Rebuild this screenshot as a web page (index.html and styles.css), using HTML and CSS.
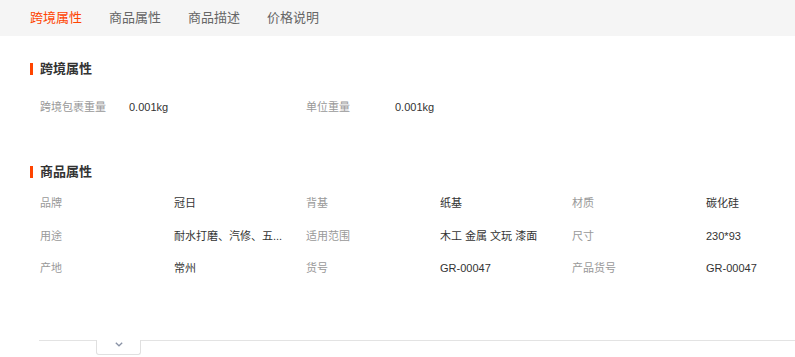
FILE: index.html
```html
<!DOCTYPE html>
<html lang="zh">
<head>
<meta charset="utf-8">
<title>商品属性</title>
<link rel="stylesheet" href="styles.css">
</head>
<body>
<nav class="tabs">
  <span class="tab active">跨境属性</span>
  <span class="tab">商品属性</span>
  <span class="tab">商品描述</span>
  <span class="tab">价格说明</span>
</nav>

<section class="section s1">
  <h2 class="title">跨境属性</h2>
  <div class="grid grid-cross">
    <span class="label">跨境包裹重量</span><span class="value">0.001kg</span>
    <span class="label">单位重量</span><span class="value">0.001kg</span>
  </div>
</section>

<section class="section s2">
  <h2 class="title">商品属性</h2>
  <div class="grid grid-attr">
    <span class="label">品牌</span><span class="value">冠日</span>
    <span class="label">背基</span><span class="value">纸基</span>
    <span class="label">材质</span><span class="value">碳化硅</span>
    <span class="label">用途</span><span class="value">耐水打磨、汽修、五...</span>
    <span class="label">适用范围</span><span class="value">木工 金属 文玩 漆面</span>
    <span class="label">尺寸</span><span class="value">230*93</span>
    <span class="label">产地</span><span class="value">常州</span>
    <span class="label">货号</span><span class="value">GR-00047</span>
    <span class="label">产品货号</span><span class="value">GR-00047</span>
  </div>
</section>

<div class="fold">
  <div class="fold-tab">
    <svg width="8" height="5" viewBox="0 0 8 5"><path d="M0.8 0.8 L4 3.8 L7.2 0.8" fill="none" stroke="#8a93a6" stroke-width="1.3"/></svg>
  </div>
</div>
</body>
</html>
```

FILE: styles.css
```css
html, body {
  margin: 0;
  padding: 0;
  background: #fff;
}
body {
  font-family: "Liberation Sans", "Noto Sans CJK SC", sans-serif;
  color: #333;
  width: 795px;
  overflow: hidden;
}
.tabs {
  display: flex;
  gap: 27px;
  height: 36px;
  line-height: 36px;
  background: #f5f5f5;
  padding-left: 30px;
  font-size: 13px;
  color: #666;
}
.tab.active {
  color: #ff4400;
}
.section {
  padding-left: 30px;
}
.title {
  margin: 0;
  display: flex;
  align-items: center;
  gap: 7px;
  font-size: 13px;
  line-height: 14px;
  font-weight: bold;
  color: #333;
}
.title::before {
  content: "";
  width: 3px;
  height: 12px;
  background: #ff4400;
}
.s1 .title {
  margin-top: 26px;
}
.s2 .title {
  margin-top: 42px;
}
.grid {
  display: grid;
  padding-left: 10px;
  font-size: 11px;
}
.grid-cross {
  margin-top: 15px;
  grid-template-columns: 89px 177px 89px 1fr;
  line-height: 32px;
}
.grid-attr {
  margin-top: 8px;
  grid-template-columns: 134px 132px 134px 132px 134px 1fr;
  line-height: 32.5px;
}
.label {
  color: #999;
  white-space: nowrap;
}
.value {
  color: #333;
  white-space: nowrap;
}
.fold {
  margin: 55px 0 0 39px;
  border-top: 1px solid #e3e3e3;
  display: flex;
}
.fold-tab {
  margin: -1px 0 0 57px;
  width: 45px;
  height: 15px;
  background: #fff;
  border: 1px solid #e0e0e0;
  border-top: none;
  border-radius: 0 0 3px 3px;
  display: flex;
  justify-content: center;
  padding-top: 2px;
  box-sizing: border-box;
}
.fold-tab svg {
  display: block;
}
```
